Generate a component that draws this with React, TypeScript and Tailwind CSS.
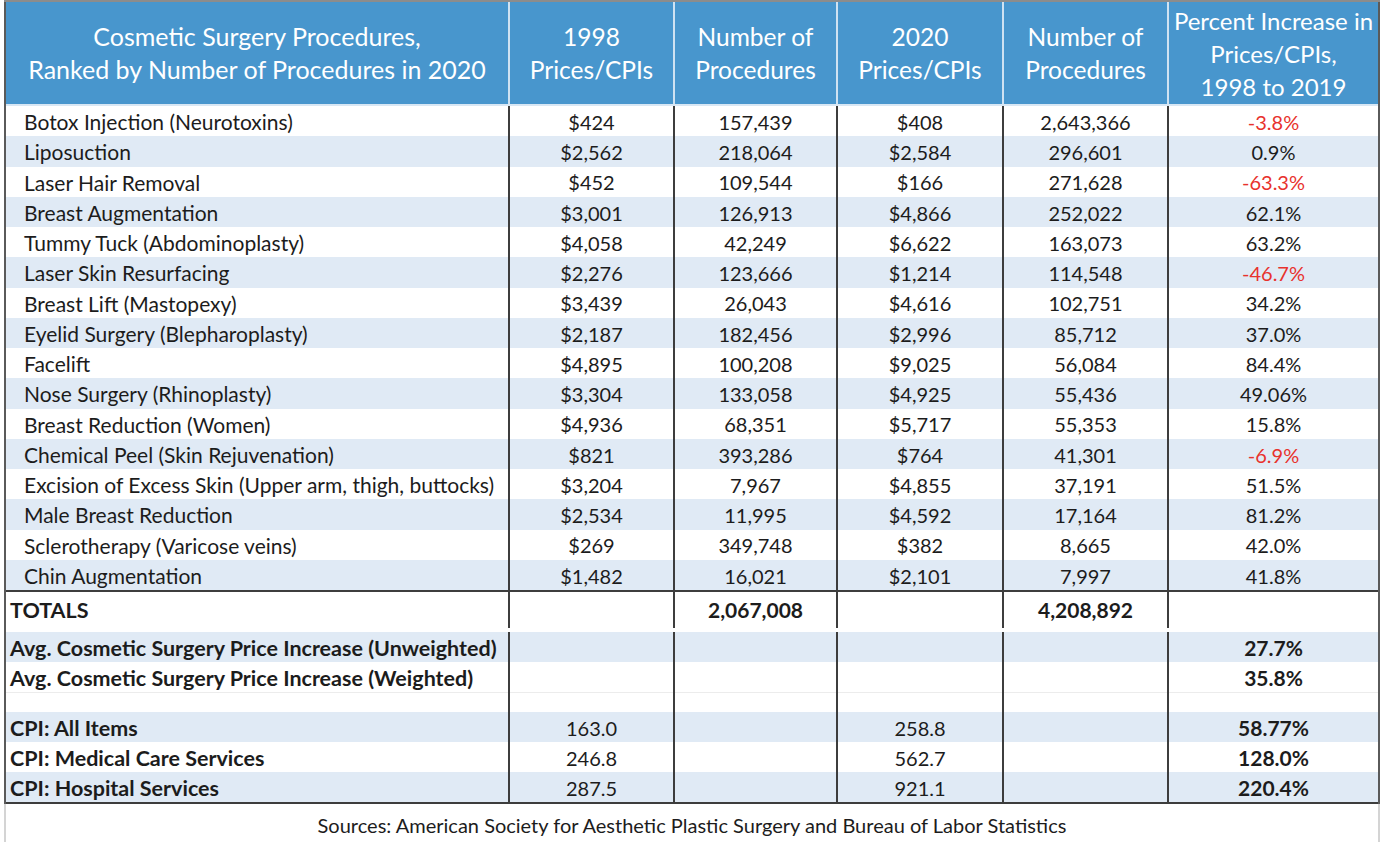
import React from "react";

type Row = { name: string; p98: string; n98: string; p20: string; n20: string; pct: string; neg?: boolean };

const rows: Row[] = [
  { name: "Botox Injection (Neurotoxins)", p98: "$424", n98: "157,439", p20: "$408", n20: "2,643,366", pct: "-3.8%", neg: true },
  { name: "Liposuction", p98: "$2,562", n98: "218,064", p20: "$2,584", n20: "296,601", pct: "0.9%" },
  { name: "Laser Hair Removal", p98: "$452", n98: "109,544", p20: "$166", n20: "271,628", pct: "-63.3%", neg: true },
  { name: "Breast Augmentation", p98: "$3,001", n98: "126,913", p20: "$4,866", n20: "252,022", pct: "62.1%" },
  { name: "Tummy Tuck (Abdominoplasty)", p98: "$4,058", n98: "42,249", p20: "$6,622", n20: "163,073", pct: "63.2%" },
  { name: "Laser Skin Resurfacing", p98: "$2,276", n98: "123,666", p20: "$1,214", n20: "114,548", pct: "-46.7%", neg: true },
  { name: "Breast Lift (Mastopexy)", p98: "$3,439", n98: "26,043", p20: "$4,616", n20: "102,751", pct: "34.2%" },
  { name: "Eyelid Surgery (Blepharoplasty)", p98: "$2,187", n98: "182,456", p20: "$2,996", n20: "85,712", pct: "37.0%" },
  { name: "Facelift", p98: "$4,895", n98: "100,208", p20: "$9,025", n20: "56,084", pct: "84.4%" },
  { name: "Nose Surgery (Rhinoplasty)", p98: "$3,304", n98: "133,058", p20: "$4,925", n20: "55,436", pct: "49.06%" },
  { name: "Breast Reduction (Women)", p98: "$4,936", n98: "68,351", p20: "$5,717", n20: "55,353", pct: "15.8%" },
  { name: "Chemical Peel (Skin Rejuvenation)", p98: "$821", n98: "393,286", p20: "$764", n20: "41,301", pct: "-6.9%", neg: true },
  { name: "Excision of Excess Skin (Upper arm, thigh, buttocks)", p98: "$3,204", n98: "7,967", p20: "$4,855", n20: "37,191", pct: "51.5%" },
  { name: "Male Breast Reduction", p98: "$2,534", n98: "11,995", p20: "$4,592", n20: "17,164", pct: "81.2%" },
  { name: "Sclerotherapy (Varicose veins)", p98: "$269", n98: "349,748", p20: "$382", n20: "8,665", pct: "42.0%" },
  { name: "Chin Augmentation", p98: "$1,482", n98: "16,021", p20: "$2,101", n20: "7,997", pct: "41.8%" },
];

const cols = "grid grid-cols-[504px_165px_163px_166px_165px_209px]";
const cellB = "border-r-2 border-[#3d3d3d]";

function HeadCell({ lines, last, size }: { lines: string[]; last?: boolean; size?: string }) {
  return (
    <div
      className={`flex flex-col items-center justify-center text-center text-white ${size ?? "text-[24.5px]"} leading-[33px] whitespace-nowrap ${
        last ? "" : "border-r-2 border-[#cfe2f2]"
      }`}
    >
      {lines.map((l) => (
        <div key={l}>{l}</div>
      ))}
    </div>
  );
}

function DataRow({
  cells,
  bg,
  h,
  bold,
  labelPad,
  red,
  boldVals,
}: {
  cells: string[];
  bg: string;
  h: string;
  bold?: boolean;
  labelPad: string;
  red?: boolean;
  boldVals?: boolean[];
}) {
  return (
    <div className={`${cols} ${h} ${bg}`}>
      <div
        className={`${cellB} flex items-center whitespace-nowrap ${labelPad} ${
          bold ? "font-bold text-[21.5px]" : "text-[21px]"
        }`}
      >
        {cells[0]}
      </div>
      {cells.slice(1).map((c, i) => (
        <div
          key={i}
          className={`flex items-center justify-center ${i < 4 ? cellB : ""} ${
            boldVals && boldVals[i] ? "font-bold text-[21px]" : "text-[20px]"
          } ${i === 4 && red ? "text-[#e8322d]" : ""}`}
        >
          {c}
        </div>
      ))}
    </div>
  );
}

export default function App() {
  return (
    <div
      className="w-[1384px] h-[842px] bg-white overflow-hidden text-[#1c1c1c] text-[20px]"
      style={{ fontFamily: "Lato, 'Open Sans', sans-serif" }}
    >
      <div className="ml-[4px] w-[1376px] border-t-2 border-[#8c8c8c]">
        <div className="border-l-2 border-r-2 border-[#5a5a5a]">
          {/* header */}
          <div className={`${cols} h-[104px] bg-[#4896cd] border-b-2 border-[#d8e7f4]`}>
            <HeadCell lines={["Cosmetic Surgery Procedures,", "Ranked by Number of Procedures in 2020"]} size="text-[25px]" />
            <HeadCell lines={["1998", "Prices/CPIs"]} />
            <HeadCell lines={["Number of", "Procedures"]} />
            <HeadCell lines={["2020", "Prices/CPIs"]} />
            <HeadCell lines={["Number of", "Procedures"]} />
            <HeadCell lines={["Percent Increase in", "Prices/CPIs,", "1998 to 2019"]} last size="text-[24px]" />
          </div>
          {/* body rows */}
          {rows.map((r, i) => (
            <DataRow
              key={r.name}
              cells={[r.name, r.p98, r.n98, r.p20, r.n20, r.pct]}
              bg={i % 2 === 0 ? "bg-white" : "bg-[#e0eaf5]"}
              h="h-[30.25px]"
              labelPad="pl-[18px]"
              red={r.neg}
            />
          ))}
          <div className="h-[2px] bg-[#3d3d3d]" />
          <DataRow
            cells={["TOTALS", "", "2,067,008", "", "4,208,892", ""]}
            bg="bg-white"
            h="h-[40px] pb-[4px]"
            bold
            labelPad="pl-[4px]"
            boldVals={[false, true, false, true, false]}
          />
          <DataRow
            cells={["Avg. Cosmetic Surgery Price Increase (Unweighted)", "", "", "", "", "27.7%"]}
            bg="bg-[#e0eaf5]"
            h="h-[30px]"
            bold
            labelPad="pl-[4px]"
            boldVals={[false, false, false, false, true]}
          />
          <DataRow
            cells={["Avg. Cosmetic Surgery Price Increase (Weighted)", "", "", "", "", "35.8%"]}
            bg="bg-white"
            h="h-[30px]"
            bold
            labelPad="pl-[4px]"
            boldVals={[false, false, false, false, true]}
          />
          <div className="border-t border-[#ececec]">
            <DataRow cells={["", "", "", "", "", ""]} bg="bg-white" h="h-[19px]" labelPad="pl-[4px]" />
          </div>
          <DataRow
            cells={["CPI: All Items", "163.0", "", "258.8", "", "58.77%"]}
            bg="bg-[#e0eaf5]"
            h="h-[30px]"
            bold
            labelPad="pl-[4px]"
            boldVals={[false, false, false, false, true]}
          />
          <DataRow
            cells={["CPI: Medical Care Services", "246.8", "", "562.7", "", "128.0%"]}
            bg="bg-white"
            h="h-[30px]"
            bold
            labelPad="pl-[4px]"
            boldVals={[false, false, false, false, true]}
          />
          <DataRow
            cells={["CPI: Hospital Services", "287.5", "", "921.1", "", "220.4%"]}
            bg="bg-[#e0eaf5]"
            h="h-[30px]"
            bold
            labelPad="pl-[4px]"
            boldVals={[false, false, false, false, true]}
          />
          <div className="h-[2px] bg-[#3d3d3d]" />
        </div>
        <div className="h-[40px] border-l-2 border-r-2 border-[#d4d4d4] flex items-center justify-center text-[20px] pt-[2px]">
          Sources: American Society for Aesthetic Plastic Surgery and Bureau of Labor Statistics
        </div>
      </div>
    </div>
  );
}
